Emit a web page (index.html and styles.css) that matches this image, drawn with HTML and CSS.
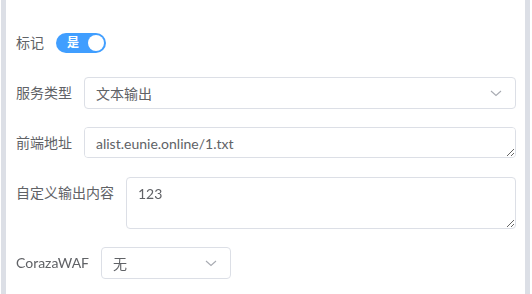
FILE: index.html
```html
<!DOCTYPE html>
<html lang="zh-CN">
<head>
	<title>编辑服务</title>
	<link rel="stylesheet" href="styles.css">
</head>
<body>
<div class="frame">
	<div class="edge edge-left"></div>
	<div class="content">
		<form class="form">
			<div class="form-item">
				<label class="form-label">标记</label>
				<div class="switch">
					<span class="switch-text">是</span>
					<span class="switch-knob"></span>
				</div>
			</div>

			<div class="form-item">
				<label class="form-label">服务类型</label>
				<div class="select select-wide">
					<span class="select-value">文本输出</span>
					<svg class="select-arrow" width="14" height="14" viewBox="0 0 14 14">
						<path d="M2 5 L7 9.5 L12 5" fill="none" stroke="#a8abb2" stroke-width="1.1"/>
					</svg>
				</div>
			</div>

			<div class="form-item">
				<label class="form-label">前端地址</label>
				<textarea class="textarea textarea-short">alist.eunie.online/1.txt</textarea>
			</div>

			<div class="form-item">
				<label class="form-label">自定义输出内容</label>
				<textarea class="textarea textarea-tall">123</textarea>
			</div>

			<div class="form-item">
				<label class="form-label">CorazaWAF</label>
				<div class="select select-small">
					<span class="select-value">无</span>
					<svg class="select-arrow" width="14" height="14" viewBox="0 0 14 14">
						<path d="M2 5 L7 9.5 L12 5" fill="none" stroke="#a8abb2" stroke-width="1.1"/>
					</svg>
				</div>
			</div>
		</form>
	</div>
	<div class="edge edge-right"></div>
</div>
</body>
</html>
```

FILE: styles.css
```css
body {
    margin: 0;
    background: #ffffff;
    font-family: Lato, 'Noto Sans CJK SC', sans-serif;
    font-size: 14px;
    color: #606266;
    overflow: hidden;
}

.frame {
    display: flex;
    height: 294px;
}

.edge {
    width: 5px;
    background-color: #dcdfe6;
}

.edge-left {
    margin-left: 1px;
}

.edge-right {
    margin-right: 2px;
}

.content {
    flex: 1;
    padding: 27px 9px 0 10px;
}

.form {
    display: flex;
    flex-direction: column;
    gap: 18px;
}

.form-item {
    display: flex;
    align-items: flex-start;
}

.form-label {
    line-height: 32px;
    padding-right: 12px;
    color: #606266;
    white-space: nowrap;
}

.switch {
    margin-top: 6px;
    width: 50px;
    height: 20px;
    box-sizing: border-box;
    border-radius: 10px;
    background-color: #409eff;
    display: flex;
    align-items: center;
    justify-content: space-between;
    padding: 0 2px 0 11px;
}

.switch-text {
    color: #ffffff;
    font-size: 12px;
    font-weight: 700;
    line-height: 20px;
}

.switch-knob {
    width: 16px;
    height: 16px;
    border-radius: 50%;
    background-color: #ffffff;
}

.select {
    height: 32px;
    box-sizing: border-box;
    border: 1px solid #dcdfe6;
    border-radius: 4px;
    display: flex;
    align-items: center;
    justify-content: space-between;
    padding: 0 12px 0 11px;
}

.select-wide {
    flex: 1;
}

.select-small {
    width: 130px;
}

.select-value {
    color: #606266;
}

.textarea {
    flex: 1;
    box-sizing: border-box;
    margin: 0;
    border: 1px solid #dcdfe6;
    border-radius: 4px;
    padding: 5px 11px;
    font-family: Lato, 'Noto Sans CJK SC', sans-serif;
    font-size: 14px;
    line-height: 1.5;
    color: #606266;
    outline: none;
}

.textarea-short {
    height: 31px;
}

.textarea-tall {
    height: 52px;
}
```
